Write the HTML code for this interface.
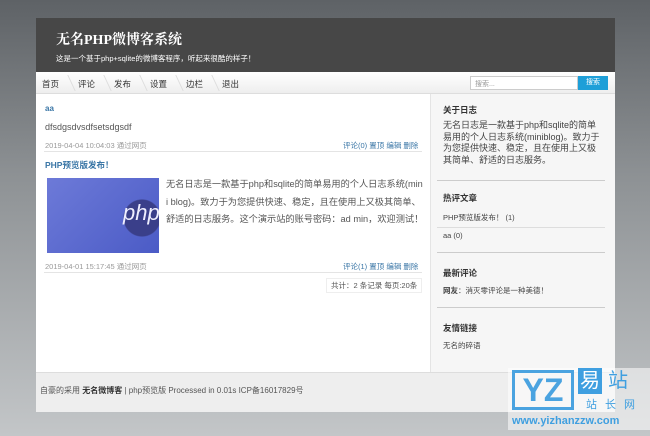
<!DOCTYPE html>
<html><head><meta charset="utf-8"><style>
*{margin:0;padding:0;box-sizing:border-box}
body{width:650px;height:436px;overflow:hidden;font-family:"Liberation Sans","Noto Sans CJK SC",sans-serif;font-size:8px;color:#555;background:linear-gradient(#5e6266,#8d9194 40%,#c3c6c8);position:relative}
.wrap{position:absolute;left:36px;top:18px;width:579px;height:394px;background:#fff}
.hd{height:54px;background:#474747;padding:14px 0 0 20px;color:#fff}
.hd h1{font-family:"Liberation Serif","Noto Serif CJK SC",serif;font-size:14px;font-weight:bold;line-height:18px}
.hd p{font-size:7.5px;margin-top:3px}
.nav{height:22px;background:linear-gradient(#fff,#eee);border-bottom:1px solid #ddd;position:relative}
.nav span{position:absolute;top:6px;font-size:8.5px;color:#333}
.nav i{position:absolute;top:3px;width:12px;height:16px;border-right:1px solid #ddd;transform:skewX(25deg)}
.srch{position:absolute;left:434px;top:4px;width:108px;height:14px;border:1px solid #ccc;background:#fff;font-size:7px;color:#999;padding:2px 4px}
.btn{position:absolute;left:542px;top:4px;width:30px;height:14px;background:#1e9fd8;color:#fff;font-size:7px;text-align:center;line-height:14px}
.side{position:absolute;left:394px;top:76px;width:185px;height:278px;background:#f6f6f6;border-left:1px solid #e4e4e4}
.side h3{font-size:8.5px;color:#333;font-weight:bold;position:absolute;left:12px}
.side .t{position:absolute;left:12px;font-size:9px;color:#444;line-height:11.5px;width:160px;word-break:break-all}
.side .s{font-size:7.5px}
.hr{position:absolute;left:6px;width:168px;height:1px;background:#ccc}
.ft{position:absolute;left:0;top:354px;width:579px;height:40px;background:#eee;border-top:1px solid #ddd;padding:12px 4px;font-size:8px;color:#555}
.blue{color:#3a76a6}
.abs{position:absolute}
</style></head><body>
<div class="wrap">
<div class="hd"><h1>无名PHP微博客系统</h1><p>这是一个基于php+sqlite的微博客程序，听起来很酷的样子！</p></div>
<div class="nav">
<span style="left:6px">首页</span><i style="left:24px"></i><span style="left:42px">评论</span><i style="left:60px"></i><span style="left:78px">发布</span><i style="left:96px"></i><span style="left:114px">设置</span><i style="left:132px"></i><span style="left:150px">边栏</span><i style="left:168px"></i><span style="left:186px">退出</span>
<div class="srch">搜索...</div><div class="btn">搜索</div>
</div>
<div class="abs blue" style="left:9px;top:86px;font-weight:bold;font-size:8px">aa</div>
<div class="abs" style="left:9px;top:104px;font-size:9px;color:#555">dfsdgsdvsdfsetsdgsdf</div>
<div class="abs" style="left:9px;top:122px;font-size:7.5px;color:#999">2019-04-04 10:04:03 通过网页</div>
<div class="abs blue" style="left:307px;top:122px;font-size:7.5px">评论(0) 置顶 编辑 删除</div>
<div class="abs" style="left:8px;top:133px;width:378px;height:1px;background:#e4e4e4"></div>
<div class="abs blue" style="left:9px;top:141px;font-weight:bold;font-size:8.5px">PHP预览版发布！</div>
<div class="abs" style="left:11px;top:160px;width:112px;height:75px;background:radial-gradient(circle at 95px 40px,#3a3f8a 18px,transparent 19px),linear-gradient(135deg,#6d7ad8,#4b5bc6);color:#eef;font-size:22px;font-style:italic;padding:22px 0 0 76px;overflow:hidden">php</div>
<div class="abs" style="left:130px;top:158px;width:258px;font-size:9.2px;line-height:17.5px;color:#555;word-break:break-all">无名日志是一款基于php和sqlite的简单易用的个人日志系统(mini blog)。致力于为您提供快速、稳定，且在使用上又极其简单、舒适的日志服务。这个演示站的账号密码：ad min，欢迎测试！</div>
<div class="abs" style="left:9px;top:243px;font-size:7.5px;color:#999">2019-04-01 15:17:45 通过网页</div>
<div class="abs blue" style="left:307px;top:243px;font-size:7.5px">评论(1) 置顶 编辑 删除</div>
<div class="abs" style="left:8px;top:254px;width:378px;height:1px;background:#e4e4e4"></div>
<div class="abs" style="left:290px;top:260px;font-size:7.5px;color:#555;border:1px solid #eee;padding:1px 4px">共计：2 条记录 每页:20条</div>
<div class="side" style="top:76px">
<h3 style="top:10px">关于日志</h3>
<div class="t" style="top:26px">无名日志是一款基于php和sqlite的简单易用的个人日志系统(miniblog)。致力于为您提供快速、稳定，且在使用上又极其简单、舒适的日志服务。</div>
<div class="hr" style="top:86px"></div>
<h3 style="top:98px">热评文章</h3>
<div class="t s" style="top:118px">PHP预览版发布！ (1)</div>
<div class="hr" style="top:133px;background:#ddd"></div>
<div class="t s" style="top:136px">aa (0)</div>
<div class="hr" style="top:158px"></div>
<h3 style="top:173px">最新评论</h3>
<div class="t s" style="top:191px"><b>网友</b>：消灭零评论是一种美德！</div>
<div class="hr" style="top:213px"></div>
<h3 style="top:228px">友情链接</h3>
<div class="t s" style="top:246px">无名的碎语</div>
</div>
<div class="ft">自豪的采用 <b style="color:#333">无名微博客</b> | php预览版 Processed in 0.01s ICP备16017829号</div>
</div>
<div class="abs" style="left:508px;top:368px;width:142px;height:62px;background:rgba(255,255,255,.55)">
<div class="abs" style="left:4px;top:2px;width:62px;height:40px;border:3px solid #4aa3e0;color:#4aa3e0;font-size:32px;font-weight:bold;line-height:34px;text-align:center">YZ</div>
<div class="abs" style="left:70px;top:0;width:24px;height:26px;background:#3f9fe0;color:#fff;font-size:20px;text-align:center;line-height:26px">易</div>
<div class="abs" style="left:100px;top:0;font-size:20px;color:#3f9fe0;line-height:26px">站</div>
<div class="abs" style="left:78px;top:28px;font-size:11px;color:#3f9fe0;letter-spacing:8px">站长网</div>
<div class="abs" style="left:4px;top:47px;font-size:11px;font-weight:bold;color:#3f9fe0">www.yizhanzzw.com</div>
</div>
</body></html>
